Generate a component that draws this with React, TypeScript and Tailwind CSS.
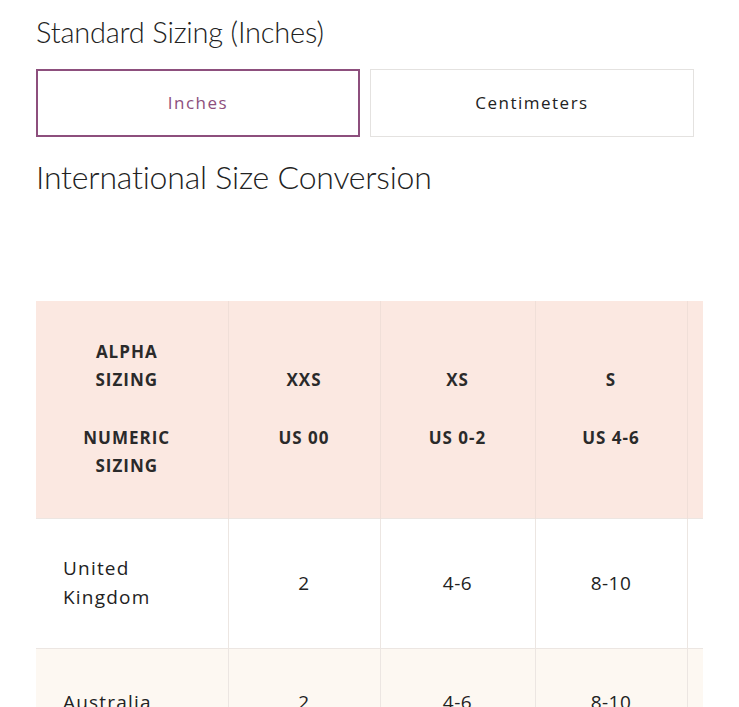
import React from "react";

const sizes = [
  { alpha: "XXS", numeric: "US 00", uk: "2", au: "2" },
  { alpha: "XS", numeric: "US 0-2", uk: "4-6", au: "4-6" },
  { alpha: "S", numeric: "US 4-6", uk: "8-10", au: "8-10" },
];

const heading = { fontFamily: "Lato, 'Open Sans', sans-serif" };
const body = { fontFamily: "'Open Sans', Roboto, sans-serif" };

export default function App() {
  return (
    <div className="min-h-[707px] w-[739px] overflow-hidden bg-white text-[#222]">
      <div className="pl-[36px] pt-[14px]">
        <h2 style={heading} className="text-[29px] font-light leading-[36px] tracking-[-0.2px]">
          Standard Sizing (Inches)
        </h2>

        <div style={body} className="mt-[19px] flex gap-[10px]">
          <button className="h-[68px] w-[324px] border-2 border-[#8d4f7d] text-[17px] tracking-[1.5px] text-[#8d4f7d]">
            Inches
          </button>
          <button className="h-[68px] w-[324px] border border-[#e4e2e0] text-[17px] tracking-[1.5px] text-[#222]">
            Centimeters
          </button>
        </div>

        <h2 style={heading} className="mt-[19px] text-[32px] font-light leading-[42px] tracking-[-0.2px]">
          International Size Conversion
        </h2>

        <div className="mt-[103px] w-[667px] overflow-hidden">
          <table style={body} className="w-[720px] table-fixed border-collapse">
            <colgroup>
              <col className="w-[192px]" />
              <col className="w-[152px]" />
              <col className="w-[155px]" />
              <col className="w-[152px]" />
              <col className="w-[69px]" />
            </colgroup>
            <thead>
              <tr className="h-[217px] bg-[#fbe8e1] text-[#2a2a2a]">
                <th className="border-r border-[#f0dfd8] pr-[10px] text-[17px] font-bold leading-[28px] tracking-[1px]">
                  <p>ALPHA<br />SIZING</p>
                  <p className="mt-[30px]">NUMERIC<br />SIZING</p>
                </th>
                {sizes.map((s) => (
                  <th
                    key={s.alpha}
                    className="border-r border-[#f0dfd8] text-[17px] font-bold leading-[28px] tracking-[1px]"
                  >
                    <p>{s.alpha}</p>
                    <p className="mt-[30px]">{s.numeric}</p>
                  </th>
                ))}
                <th />
              </tr>
            </thead>
            <tbody>
              <tr className="h-[130px] border-t border-[#ece6e2] bg-white">
                <td className="pl-[27px] text-[19px] leading-[29px] tracking-[1.2px]">
                  United
                  <br />
                  Kingdom
                </td>
                {sizes.map((s) => (
                  <td key={s.alpha} className="border-l border-[#ece6e2] text-center text-[19px] tracking-[0.5px]">
                    {s.uk}
                  </td>
                ))}
                <td className="border-l border-[#ece6e2]" />
              </tr>
              <tr className="h-[108px] border-t border-[#ece6e2] bg-[#fdf8f2]">
                <td className="pl-[27px] text-[19px] leading-[29px] tracking-[1.2px]">Australia</td>
                {sizes.map((s) => (
                  <td key={s.alpha} className="border-l border-[#ece6e2] text-center text-[19px] tracking-[0.5px]">
                    {s.au}
                  </td>
                ))}
                <td className="border-l border-[#ece6e2]" />
              </tr>
            </tbody>
          </table>
        </div>
      </div>
    </div>
  );
}
